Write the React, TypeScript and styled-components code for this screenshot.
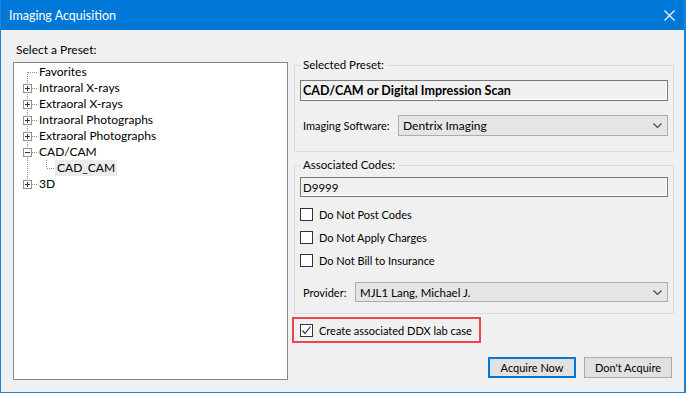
import React from "react";
import styled, { createGlobalStyle } from "styled-components";

const GlobalStyle = createGlobalStyle`
  html, body {
    margin: 0;
    padding: 0;
    background: #f0f0f0;
  }
  * {
    box-sizing: border-box;
  }
`;

type Expander = "plus" | "minus" | "none";

interface TreeItem {
  label: string;
  level: number;
  expander: Expander;
  first?: boolean;
  last?: boolean;
  selected?: boolean;
}

const treeItems: TreeItem[] = [
  { label: "Favorites", level: 0, expander: "none", first: true },
  { label: "Intraoral X-rays", level: 0, expander: "plus" },
  { label: "Extraoral X-rays", level: 0, expander: "plus" },
  { label: "Intraoral Photographs", level: 0, expander: "plus" },
  { label: "Extraoral Photographs", level: 0, expander: "plus" },
  { label: "CAD/CAM", level: 0, expander: "minus" },
  { label: "CAD_CAM", level: 1, expander: "none", selected: true },
  { label: "3D", level: 0, expander: "plus", last: true },
];

const dotted = {
  stroke: "#8c8c8c",
  strokeWidth: 1,
  strokeDasharray: "1 1",
  shapeRendering: "crispEdges" as const,
};

function Connector({ item }: { item: TreeItem }) {
  const width = item.level === 0 ? 23 : 41;
  return (
    <svg width={width} height={16} style={{ flexShrink: 0 }}>
      {item.level === 0 ? (
        <>
          <line x1={13.5} y1={item.first ? 8 : 0} x2={13.5} y2={item.last ? 8 : 16} {...dotted} />
          <line x1={14} y1={8.5} x2={23} y2={8.5} {...dotted} />
          {item.expander !== "none" && (
            <>
              <rect x={9.5} y={4.5} width={8} height={8} fill="#fff" stroke="#919191" shapeRendering="crispEdges" />
              <line x1={11} y1={8.5} x2={16} y2={8.5} stroke="#1f3b63" shapeRendering="crispEdges" />
              {item.expander === "plus" && (
                <line x1={13.5} y1={6} x2={13.5} y2={11} stroke="#1f3b63" shapeRendering="crispEdges" />
              )}
            </>
          )}
        </>
      ) : (
        <>
          <line x1={13.5} y1={0} x2={13.5} y2={16} {...dotted} />
          <line x1={32.5} y1={0} x2={32.5} y2={8} {...dotted} />
          <line x1={33} y1={8.5} x2={41} y2={8.5} {...dotted} />
        </>
      )}
    </svg>
  );
}

function Chevron() {
  return (
    <svg width={9} height={5} viewBox="0 0 9 5">
      <polyline points="0.5,0.5 4.5,4.5 8.5,0.5" fill="none" stroke="#444" strokeWidth={1.1} />
    </svg>
  );
}

function CheckMark() {
  return (
    <svg width={11} height={11} viewBox="0 0 11 11">
      <polyline points="1.5,5.5 4,8.5 9.5,1.5" fill="none" stroke="#333" strokeWidth={1.2} />
    </svg>
  );
}

function CloseIcon() {
  return (
    <svg width={11} height={11} viewBox="0 0 11 11">
      <line x1={0.5} y1={0.5} x2={10.5} y2={10.5} stroke="#fff" strokeWidth={1.1} />
      <line x1={10.5} y1={0.5} x2={0.5} y2={10.5} stroke="#fff" strokeWidth={1.1} />
    </svg>
  );
}

function CheckRow({ label, checked }: { label: string; checked?: boolean }) {
  return (
    <CheckLine>
      <Box>{checked && <CheckMark />}</Box>
      <span>{label}</span>
    </CheckLine>
  );
}

export default function App() {
  return (
    <>
      <GlobalStyle />
      <Window>
        <TitleBar>
          <Title>Imaging Acquisition</Title>
          <CloseButton>
            <CloseIcon />
          </CloseButton>
        </TitleBar>
        <Body>
          <LeftCol>
            <Caption>Select a Preset:</Caption>
            <Tree>
              {treeItems.map((item) => (
                <TreeRow key={item.label}>
                  <Connector item={item} />
                  <NodeLabel $selected={item.selected}>{item.label}</NodeLabel>
                </TreeRow>
              ))}
            </Tree>
          </LeftCol>
          <RightCol>
            <Group $top={23}>
              <GroupCaption>Selected Preset:</GroupCaption>
              <GroupInner $pt={14} $pb={15}>
                <ReadOnlyBox $bold $height={21}>
                  CAD/CAM or Digital Impression Scan
                </ReadOnlyBox>
                <FieldRow $mt={14}>
                  <FieldLabel $width={98}>Imaging Software:</FieldLabel>
                  <Combo $height={21} $size={12}>
                    <span>Dentrix Imaging</span>
                    <Chevron />
                  </Combo>
                </FieldRow>
              </GroupInner>
            </Group>
            <Group $top={13}>
              <GroupCaption>Associated Codes:</GroupCaption>
              <GroupInner $pt={11} $pb={11}>
                <ReadOnlyBox $height={20}>D9999</ReadOnlyBox>
                <CheckList>
                  <CheckRow label="Do Not Post Codes" />
                  <CheckRow label="Do Not Apply Charges" />
                  <CheckRow label="Do Not Bill to Insurance" />
                </CheckList>
                <FieldRow $mt={10}>
                  <FieldLabel $width={55}>Provider:</FieldLabel>
                  <Combo $height={20} $size={11.5}>
                    <span>MJL1 Lang, Michael J.</span>
                    <Chevron />
                  </Combo>
                </FieldRow>
              </GroupInner>
            </Group>
            <Highlight>
              <CheckRow label="Create associated DDX lab case" checked />
            </Highlight>
            <ButtonBar>
              <Button $default>Acquire Now</Button>
              <Button>Don't Acquire</Button>
            </ButtonBar>
          </RightCol>
        </Body>
      </Window>
    </>
  );
}

const Window = styled.div`
  width: 686px;
  height: 393px;
  display: flex;
  flex-direction: column;
  background: #f0f0f0;
  border: 1px solid #1883d7;
  border-right-width: 2px;
  border-top: none;
  font-family: Lato, "Liberation Sans", sans-serif;
  font-size: 12px;
  color: #000;
`;

const TitleBar = styled.div`
  height: 30px;
  display: flex;
  align-items: center;
  justify-content: space-between;
  background: #0078d7;
  padding-left: 8px;
`;

const Title = styled.div`
  color: #fff;
  font-size: 12.5px;
`;

const CloseButton = styled.div`
  width: 30px;
  height: 30px;
  display: flex;
  align-items: center;
  justify-content: center;
`;

const Body = styled.div`
  flex: 1;
  display: flex;
  padding: 12px 0 12px 12px;
`;

const LeftCol = styled.div`
  width: 275px;
  display: flex;
  flex-direction: column;
`;

const Caption = styled.div`
  height: 15px;
  line-height: 15px;
  padding-left: 3px;
  margin-bottom: 5px;
`;

const Tree = styled.div`
  flex: 1;
  background: #fff;
  border: 1px solid #828790;
  padding-top: 1px;
`;

const TreeRow = styled.div`
  height: 16px;
  display: flex;
  align-items: center;
`;

const NodeLabel = styled.span<{ $selected?: boolean }>`
  height: 16px;
  line-height: 16px;
  padding: 0 2px;
  background: ${(p) => (p.$selected ? "#ebebeb" : "transparent")};
  white-space: nowrap;
`;

const RightCol = styled.div`
  width: 381px;
  margin-left: 4px;
  display: flex;
  flex-direction: column;
  font-size: 11px;
`;

const Group = styled.div<{ $top: number }>`
  position: relative;
  margin: ${(p) => p.$top}px 0 0 2px;
  width: 380px;
  border: 1px solid #dcdcdc;
`;

const GroupCaption = styled.div`
  position: absolute;
  top: -9px;
  left: 6px;
  padding: 0 3px 0 2px;
  line-height: 15px;
  font-size: 11.5px;
  background: #f0f0f0;
`;

const GroupInner = styled.div<{ $pt: number; $pb: number }>`
  display: flex;
  flex-direction: column;
  padding: ${(p) => p.$pt}px 5px ${(p) => p.$pb}px 5px;
`;

const ReadOnlyBox = styled.div<{ $bold?: boolean; $height: number }>`
  height: ${(p) => p.$height}px;
  display: flex;
  align-items: center;
  padding-left: 2px;
  border: 1px solid #7a7a7a;
  box-shadow: inset -1px -1px 0 #fff;
  background: #f0f0f0;
  font-weight: ${(p) => (p.$bold ? 700 : 400)};
  font-size: ${(p) => (p.$bold ? "12.5px" : "11.5px")};
`;

const FieldRow = styled.div<{ $mt: number }>`
  display: flex;
  align-items: center;
  margin-top: ${(p) => p.$mt}px;
`;

const FieldLabel = styled.div<{ $width: number }>`
  width: ${(p) => p.$width}px;
  padding-left: 3px;
  white-space: nowrap;
`;

const Combo = styled.div<{ $height: number; $size: number }>`
  flex: 1;
  height: ${(p) => p.$height}px;
  display: flex;
  align-items: center;
  justify-content: space-between;
  padding: 0 5px 0 4px;
  background: #e5e5e5;
  border: 1px solid #adadad;
  font-size: ${(p) => p.$size}px;
`;

const CheckList = styled.div`
  display: flex;
  flex-direction: column;
  margin-top: 6px;
`;

const CheckLine = styled.label`
  height: 23px;
  display: flex;
  align-items: center;
  gap: 6px;
  white-space: nowrap;
`;

const Box = styled.span`
  width: 13px;
  height: 13px;
  display: flex;
  align-items: center;
  justify-content: center;
  border: 1px solid #333;
  background: #fff;
`;

const Highlight = styled.div`
  align-self: flex-start;
  margin-top: 3px;
  height: 26px;
  display: flex;
  align-items: center;
  padding: 0 7px 0 6px;
  border: 2px solid #f0434b;
`;

const ButtonBar = styled.div`
  display: flex;
  justify-content: flex-end;
  gap: 8px;
  margin-top: 14px;
  padding-right: 1px;
`;

const Button = styled.div<{ $default?: boolean }>`
  width: 88px;
  height: 21px;
  display: flex;
  align-items: center;
  justify-content: center;
  background: #e1e1e1;
  border: ${(p) => (p.$default ? "2px solid #0078d7" : "1px solid #adadad")};
`;
